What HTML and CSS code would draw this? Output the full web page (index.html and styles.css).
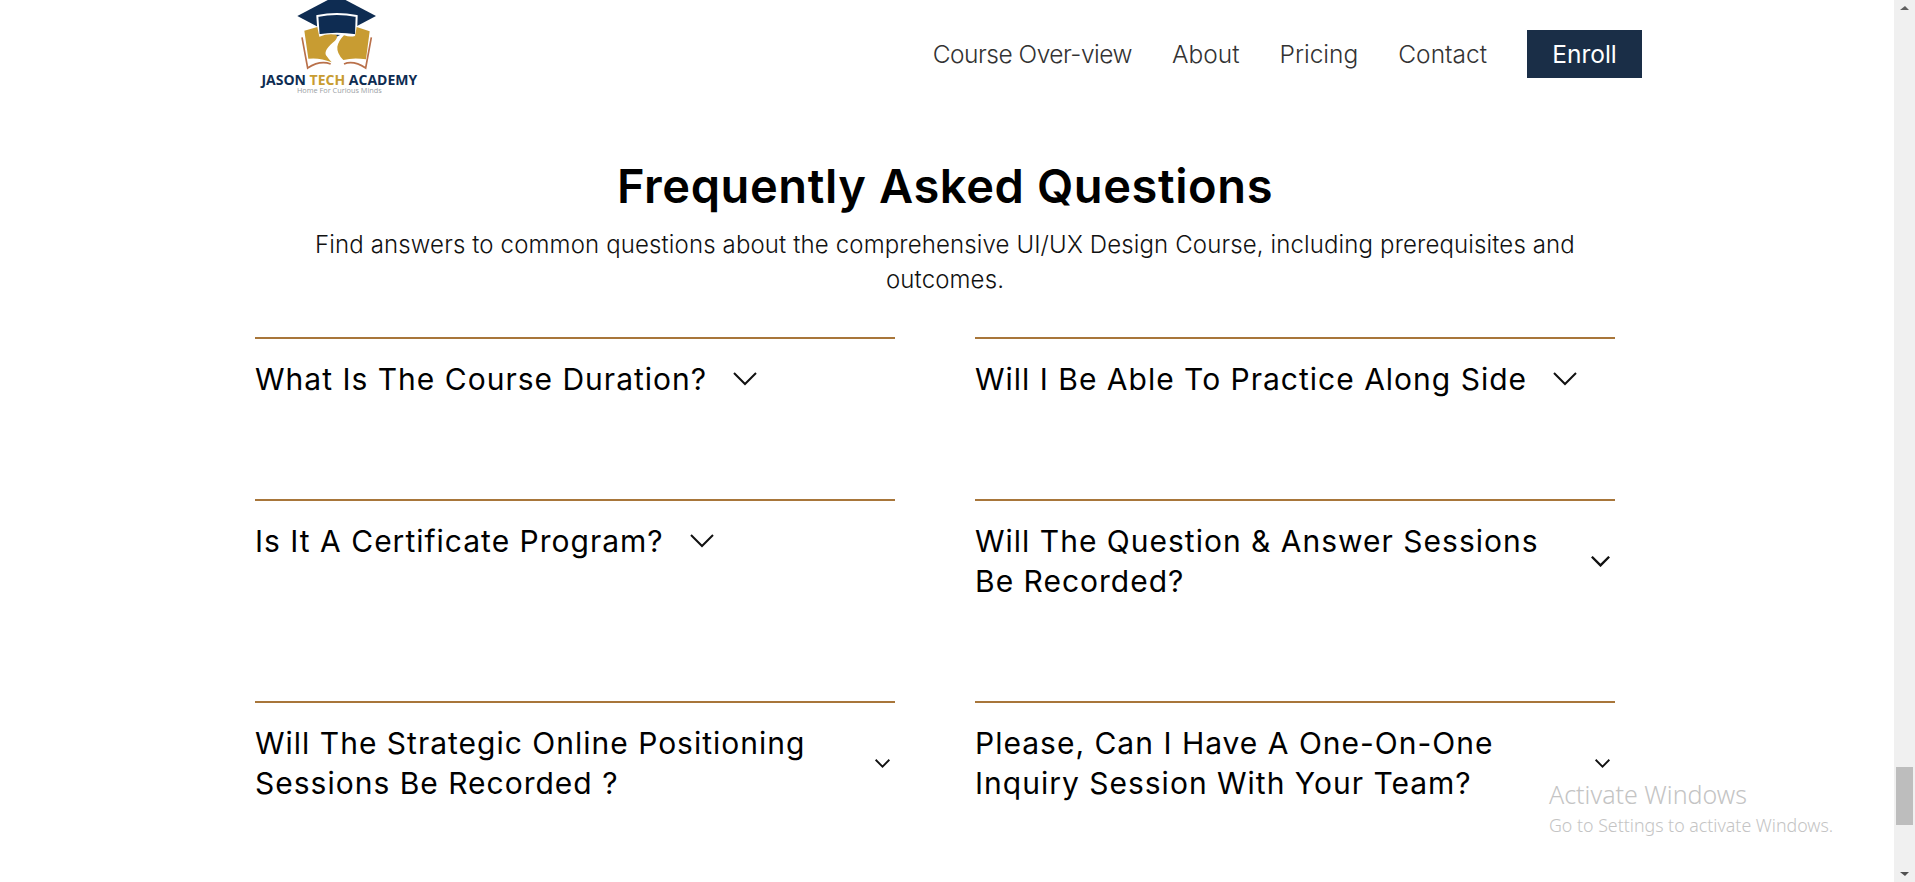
FILE: index.html
```html
<!DOCTYPE html>
<html lang="en">
<head>
<meta charset="utf-8">
<title>Jason Tech Academy</title>
<link rel="stylesheet" href="styles.css">
</head>
<body>
<div class="page">
  <div class="content">
    <header class="header">
      <a class="logo" href="#">
        <svg width="200" height="105" viewBox="0 0 600 315" aria-label="Jason Tech Academy">
          <polygon points="172,48 290,-14 408,48 290,110" fill="#0e2c52"/>
          <path d="M232 48Q290 36 350 48L348 106Q290 96 236 106Z" fill="#0e2c52" stroke="#fff" stroke-width="6"/>
          <path d="M193 92L232 81L238 110Q262 100 288 104Q296 108 285 122Q250 150 258 166Q268 180 275 187Q240 172 205 176Z" fill="#c89c32"/>
          <path d="M345 108L350 81L389 94L378 178Q340 172 310 180Q290 160 292 140Q296 122 312 106Q330 112 345 108Z" fill="#c89c32"/>
          <path d="M186 112L203 204Q240 180 272 192" fill="none" stroke="#b9704a" stroke-width="5"/>
          <path d="M394 112L377 204Q340 180 312 192" fill="none" stroke="#b9704a" stroke-width="5"/>
          <text class="logo-name" x="298" y="255" text-anchor="middle"><tspan>JASON </tspan><tspan class="logo-gold">TECH </tspan><tspan>ACADEMY</tspan></text>
          <text class="logo-tag" x="298" y="279" text-anchor="middle">Home For Curious Minds</text>
        </svg>
      </a>
      <nav class="nav">
        <a class="tight" href="#">Course Over-view</a>
        <a href="#">About</a>
        <a href="#">Pricing</a>
        <a href="#">Contact</a>
        <a class="enroll" href="#">Enroll</a>
      </nav>
    </header>
    <section class="intro">
      <h1>Frequently Asked Questions</h1>
      <p>Find answers to common questions about the comprehensive UI/UX Design Course, including prerequisites and outcomes.</p>
    </section>
    <section class="faq">
      <div class="item"><div class="q"><span>What Is The Course Duration?</span><svg class="chev" viewBox="0 0 24 14"><path d="M1 1L12 12L23 1"/></svg></div></div>
      <div class="item"><div class="q"><span>Will I Be Able To Practice Along Side</span><svg class="chev" viewBox="0 0 24 14"><path d="M1 1L12 12L23 1"/></svg></div></div>
      <div class="item"><div class="q"><span>Is It A Certificate Program?</span><svg class="chev" viewBox="0 0 24 14"><path d="M1 1L12 12L23 1"/></svg></div></div>
      <div class="item"><div class="q spread wide"><span>Will The Question &amp; Answer Sessions<br>Be Recorded?</span><svg class="chev small" viewBox="0 0 24 14"><path d="M1 1L12 12L23 1"/></svg></div></div>
      <div class="item"><div class="q spread"><span>Will The Strategic Online Positioning<br>Sessions Be Recorded ?</span><svg class="chev small" viewBox="0 0 24 14"><path d="M1 1L12 12L23 1"/></svg></div></div>
      <div class="item"><div class="q spread"><span>Please, Can I Have A One-On-One<br>Inquiry Session With Your Team?</span><svg class="chev small" viewBox="0 0 24 14"><path d="M1 1L12 12L23 1"/></svg></div></div>
    </section>
  </div>
  <div class="scrollbar">
    <span class="arrow up"></span>
    <div class="track"><div class="thumb"></div></div>
    <span class="arrow down"></span>
  </div>
</div>
<div class="activate">
  <div class="a1">Activate Windows</div>
  <div class="a2">Go to Settings to activate Windows.</div>
</div>
</body>
</html>
```
FILE: styles.css
```css
* { box-sizing: border-box; }
html, body { margin: 0; height: 882px; overflow: hidden; background: #fff; }
body { font-family: "Inter", "Open Sans", sans-serif; color: #000; }
a { text-decoration: none; color: inherit; }
.page { display: flex; width: 1915px; height: 882px; overflow: hidden; }
.content { width: 1894px; flex: none; }
.header { display: flex; justify-content: space-between; align-items: flex-start; height: 105px; padding: 0 252px 0 240px; }
.logo { display: block; height: 105px; }
.logo svg { display: block; }
.logo-name { font: 700 42px "Open Sans", sans-serif; fill: #0e2c52; }
.logo-gold { fill: #c89c32; }
.logo-tag { font: 400 22px "Open Sans", sans-serif; fill: #9a9ea3; }
.nav { display: flex; align-items: center; gap: 40px; margin-top: 30px; font-size: 24.5px; letter-spacing: 0; font-weight: 300; color: #333; }
.nav .tight { letter-spacing: -0.5px; }
.enroll { display: flex; align-items: center; justify-content: center; width: 115px; height: 48px; background: #1a2e47; color: #fff; font-weight: 400; }
.intro { width: 1290px; margin: 52px 0 0 300px; text-align: center; }
.intro h1 { margin: 0; font-size: 47px; letter-spacing: 0.6px; line-height: 58px; font-weight: 600; }
.intro p { margin: 12px 0 0; font-size: 24px; letter-spacing: 0.13px; line-height: 35px; font-weight: 300; color: #111; }
.faq { display: grid; grid-template-columns: 640px 640px; column-gap: 80px; margin: 40px 0 0 255px; width: 1360px; }
.item { border-top: 2px solid #a8763a; padding: 20px 0 100px; }
.q { display: flex; align-items: center; gap: 26px; font-size: 30px; letter-spacing: 1px; line-height: 40px; font-weight: 400; }
.q.spread { justify-content: space-between; gap: 10px; padding-right: 5px; }
.q.wide { padding-right: 5px; }
.q.wide .chev { width: 19px; height: 11px; }
.chev { width: 24px; height: 14px; flex: none; }
.chev path { fill: none; stroke: #111; stroke-width: 2; }
.chev.small { width: 15px; height: 9px; }
.chev.small path { stroke-width: 3; }
.scrollbar { width: 21px; flex: none; background: #f0f0f0; display: flex; flex-direction: column; align-items: center; height: 882px; }
.arrow { width: 0; height: 0; border-left: 5px solid transparent; border-right: 4px solid transparent; flex: none; }
.arrow.up { border-bottom: 4px solid #606060; margin-top: 6px; }
.arrow.down { border-top: 4px solid #505050; margin-bottom: 6px; }
.track { flex: 1; width: 100%; padding: 757px 2px 0; }
.thumb { width: 17px; height: 58px; background: #bdbdbd; }
.activate { position: absolute; left: 1549px; top: 778px; font-family: "Noto Sans", "Open Sans", sans-serif; color: #c4c4c4; }
.a1 { font-size: 25px; line-height: 33px; font-weight: 300; }
.a2 { font-size: 17.8px; line-height: 24px; margin-top: 2px; font-weight: 300; }
```
